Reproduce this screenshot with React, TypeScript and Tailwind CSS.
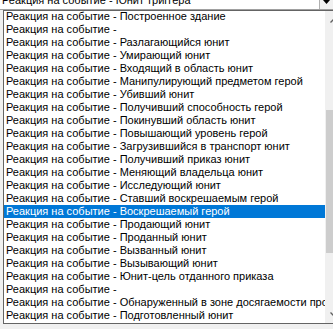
import React from "react";

const events = [
  "Построенное здание",
  "",
  "Разлагающийся юнит",
  "Умирающий юнит",
  "Входящий в область юнит",
  "Манипулирующий предметом герой",
  "Убивший юнит",
  "Получивший способность герой",
  "Покинувший область юнит",
  "Повышающий уровень герой",
  "Загрузившийся в транспорт юнит",
  "Получивший приказ юнит",
  "Меняющий владельца юнит",
  "Исследующий юнит",
  "Ставший воскрешаемым герой",
  "Воскрешаемый герой",
  "Продающий юнит",
  "Проданный юнит",
  "Вызванный юнит",
  "Вызывающий юнит",
  "Юнит-цель отданного приказа",
  "",
  "Обнаруженный в зоне досягаемости противника",
  "Подготовленный юнит",
  "Выбранный юнит",
];

export default function App() {
  const selected = 15;

  return (
    <div
      className="w-[333px] h-[329px] overflow-hidden bg-white text-[11px] text-black"
      style={{ fontFamily: '"Liberation Sans", Arial, sans-serif' }}
    >
      {/* combo box, scrolled mostly out of view */}
      <div className="flex h-[10px] border-b border-[#a0a0a0] overflow-hidden">
        <div className="flex-1 pl-[2px] -mt-[6px] leading-[13px] whitespace-nowrap">
          Реакция на событие - Юнит триггера
        </div>
        <div className="w-[14px] flex justify-center items-start border-l border-[#b0b0b0] bg-[#f0f0f0]">
          <svg width="7" height="4" viewBox="0 0 7 4">
            <path d="M0 0h7L3.5 4z" fill="#000" />
          </svg>
        </div>
      </div>

      {/* dropdown list */}
      <div className="flex flex-col h-[319px] bg-[#f0f0f0]">
        <div className="flex h-[314px] ml-[3px] w-[340px] border border-[#646464] bg-white overflow-hidden">
          <div className="flex-1 min-w-0 overflow-hidden -mt-[1px]">
            {events.map((e, i) => (
              <div
                key={i}
                className={
                  i === selected
                    ? "h-[13px] leading-[13px] pl-[2px] whitespace-nowrap overflow-hidden bg-[#0078d7] text-white"
                    : "h-[13px] leading-[13px] pl-[2px] whitespace-nowrap overflow-hidden"
                }
              >
                {"Реакция на событие - " + e}
              </div>
            ))}
          </div>
          {/* scrollbar */}
          <div className="w-[17px] shrink-0 flex flex-col bg-[#f0f0f0]">
            <div className="h-[19px] flex items-center justify-center">
              <svg width="8" height="5" viewBox="0 0 8 5">
                <path d="M0.5 4.5L4 1L7.5 4.5" stroke="#606060" strokeWidth="1.3" fill="none" />
              </svg>
            </div>
            <div className="h-[80px]" />
            <div className="h-[143px] mx-[1px] bg-[#cdcdcd]" />
            <div className="flex-1" />
            <div className="h-[17px] flex items-center justify-center">
              <svg width="8" height="5" viewBox="0 0 8 5">
                <path d="M0.5 0.5L4 4L7.5 0.5" stroke="#606060" strokeWidth="1.3" fill="none" />
              </svg>
            </div>
          </div>
        </div>
      </div>
    </div>
  );
}
